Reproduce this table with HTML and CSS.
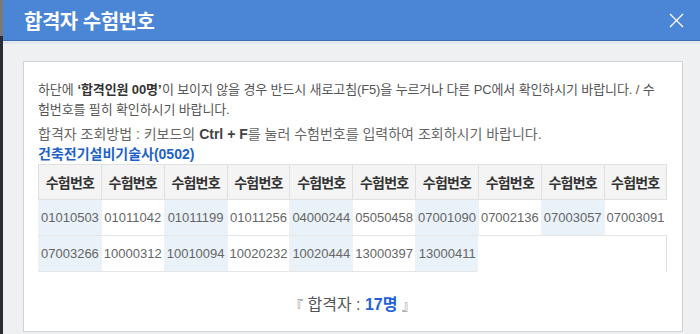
FILE: index.html
```html
<!DOCTYPE html>
<html lang="ko">
<head>
<meta charset="utf-8">
<title>합격자 수험번호</title>
<link rel="stylesheet" href="styles.css">
</head>
<body>
<div class="screen">
  <div class="edge"></div>
  <div class="modal">
    <div class="modal-head">
      <h1 class="modal-title">합격자 수험번호</h1>
      <button class="close" aria-label="닫기">
        <svg width="15" height="15" viewBox="0 0 15 15"><path d="M1 1L14 14M14 1L1 14" stroke="#fff" stroke-width="1.3" fill="none"/></svg>
      </button>
    </div>
    <div class="modal-body">
      <div class="card">
        <p class="notice">하단에 <b>‘합격인원 00명’</b>이 보이지 않을 경우 반드시 새로고침(F5)을 누르거나 다른 PC에서 확인하시기 바랍니다. / 수험번호를 필히 확인하시기 바랍니다.</p>
        <p class="howto">합격자 조회방법 : 키보드의 <b>Ctrl + F</b>를 눌러 수험번호를 입력하여 조회하시기 바랍니다.</p>
        <h2 class="exam">건축전기설비기술사(0502)</h2>
        <table class="nums">
          <thead>
            <tr><th>수험번호</th><th>수험번호</th><th>수험번호</th><th>수험번호</th><th>수험번호</th><th>수험번호</th><th>수험번호</th><th>수험번호</th><th>수험번호</th><th>수험번호</th></tr>
          </thead>
          <tbody>
            <tr><td>01010503</td><td>01011042</td><td>01011199</td><td>01011256</td><td>04000244</td><td>05050458</td><td>07001090</td><td>07002136</td><td>07003057</td><td>07003091</td></tr>
            <tr><td>07003266</td><td>10000312</td><td>10010094</td><td>10020232</td><td>10020444</td><td>13000397</td><td>13000411</td><td class="empty"></td><td class="empty"></td><td class="empty last"></td></tr>
          </tbody>
        </table>
        <p class="total"><span class="bracket">『</span> 합격자 : <strong>17명</strong> <span class="bracket">』</span></p>
      </div>
    </div>
  </div>
</div>
</body>
</html>
```
FILE: styles.css
```css
html, body {
  margin: 0;
  padding: 0;
}
body {
  width: 700px;
  height: 334px;
  overflow: hidden;
  font-family: "Liberation Sans", "Noto Sans CJK KR", sans-serif;
  background: #eef0f2;
}
.screen {
  display: flex;
  width: 700px;
  height: 334px;
}
.edge {
  width: 3px;
  flex: none;
  background: linear-gradient(#7a7a7a 0, #7a7a7a 36px, #2a2d33 36px, #2a2d33 100%);
}
.modal {
  flex: 1;
  display: flex;
  flex-direction: column;
  background: #eef0f2;
}
.modal-head {
  height: 40px;
  flex: none;
  background: #4a86d5;
  border-bottom: 1px solid #3d6eaf;
  display: flex;
  align-items: center;
  justify-content: space-between;
  padding: 0 15px 0 20px;
}
.modal-title {
  margin: 0 0 0 1px;
  font-size: 20px;
  font-weight: bold;
  color: #fff;
  letter-spacing: -0.5px;
}
.close {
  width: 20px;
  height: 20px;
  padding: 0;
  border: 0;
  background: none;
  display: flex;
  align-items: center;
  justify-content: center;
  margin-top: 1px;
}
.modal-body {
  flex: 1;
  padding: 20px 19px 0 20px;
  border-top: 3px solid #e3e8ef;
}
.card {
  background: #fff;
  border: 1px solid #cfd2d6;
  padding: 18px 15px 14px 14px;
  height: 271px;
  box-sizing: border-box;
  margin-top: -3px;
}
.notice {
  margin: 0;
  padding-right: 7px;
  font-size: 13px;
  line-height: 20px;
  color: #555;
  letter-spacing: -0.12px;
}
.notice b {
  color: #333;
  margin: 0 0.5px;
}
.howto {
  margin: 4px 0 0;
  font-size: 14px;
  line-height: 20px;
  color: #666;
}
.howto b {
  color: #444;
}
.exam {
  margin: 0;
  font-size: 14px;
  line-height: 20px;
  font-weight: bold;
  color: #1f62c6;
}
.nums {
  border-collapse: collapse;
  width: 627px;
}
.nums th {
  background: #f4f4f4;
  border: 1px solid #e0e0e0;
  height: 34px;
  padding: 0 4px;
  font-size: 14px;
  font-weight: bold;
  color: #333;
  letter-spacing: -0.8px;
}
.nums td {
  height: 35px;
  padding: 0 2px;
  font-size: 13px;
  color: #666;
  text-align: center;
  border-bottom: 1px solid #e6e6e6;
  border-left: 1px solid #f0f0f0;
}
.nums td:nth-child(odd) {
  background: #e9f1f9;
}
.nums td.empty {
  background: #fff;
  border: 0;
}
.nums td.last {
  border-right: 1px solid #e0e0e0;
}
.total {
  margin: 23px 0 0;
  text-align: center;
  font-size: 16px;
  line-height: 20px;
  color: #555;
}
.total .bracket {
  font-size: 13px;
  color: #777;
}
.total strong {
  color: #1f62d6;
}
```
